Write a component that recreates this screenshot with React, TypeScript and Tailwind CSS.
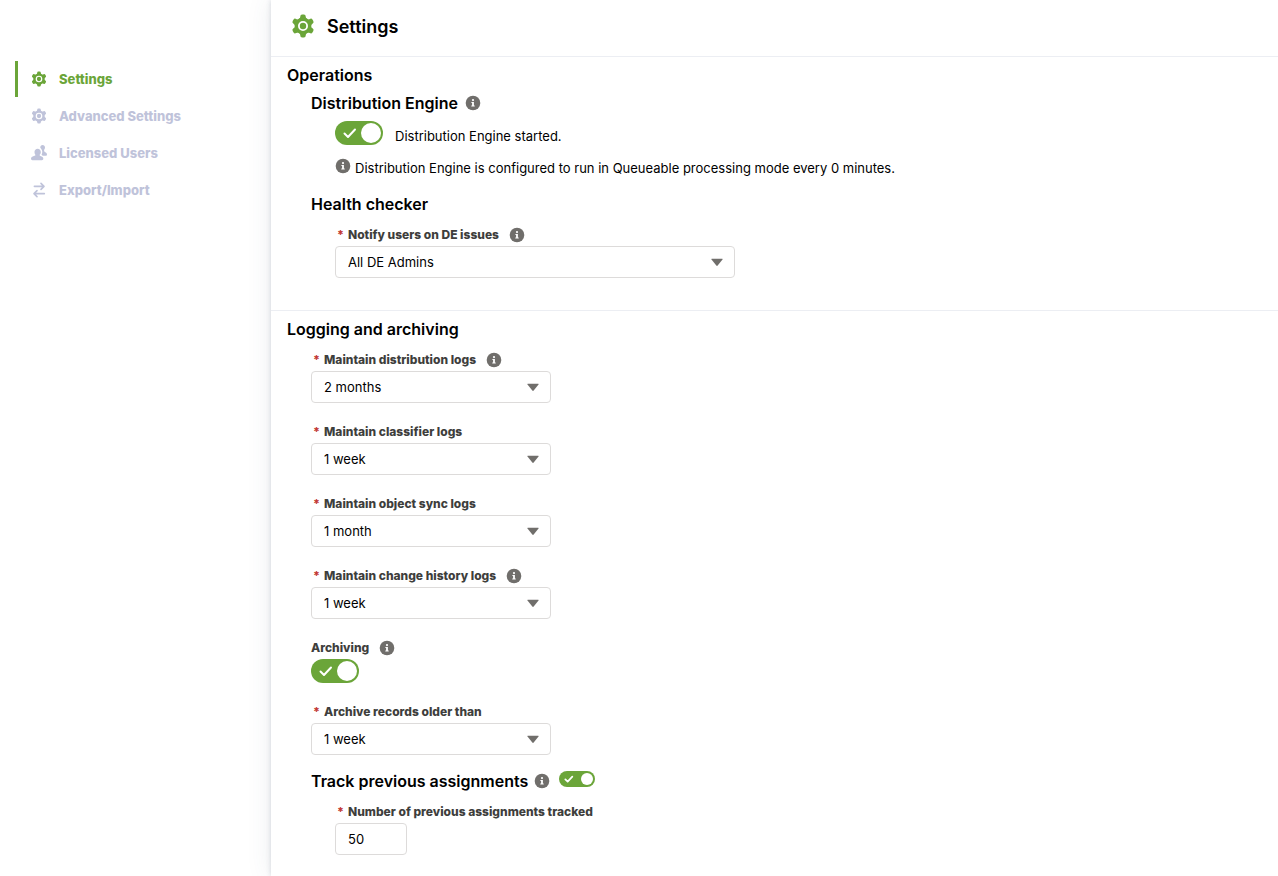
import { useId } from "react";
import type { ReactNode } from "react";
import clsx from "clsx";

const GearIcon = ({ className }: { className?: string }) => (
  <svg viewBox="0 0 24 24" className={className} fill="currentColor" aria-hidden="true">
    <path
      fillRule="evenodd"
      d="M12 3.6a8.4 8.4 0 1 0 0 16.8a8.4 8.4 0 1 0 0-16.8zM12 7a5 5 0 1 1 0 10a5 5 0 1 1 0-10z"
    />
    <circle cx="12" cy="12" r="3.2" />
    {[0, 60, 120, 180, 240, 300].map((deg) => (
      <path
        key={deg}
        transform={`rotate(${deg} 12 12)`}
        d="M7.8 5.6Q9.3 4.4 9.3 2.600Q9.3 .6 11.100 .6H12.900Q14.700 .6 14.700 2.600Q14.700 4.400 16.200 5.600L12 5.200z"
      />
    ))}
  </svg>
);

const UsersIcon = ({ className }: { className?: string }) => (
  <svg viewBox="0 0 24 24" className={className} fill="currentColor" aria-hidden="true">
    <path d="M10 5.500c2.800 0 4.700 2.100 4.700 4.900 0 1.900-.8 3.300-1.700 4.300-.3.900.1 1.500 1.100 1.900 2.700 1 4.400 1.900 4.400 4.200 0 1.400-.9 2.200-2.200 2.200H2.200C.9 23 0 22.200 0 20.800c0-2.300 1.700-3.200 4.400-4.200 1.700-.6 2.300-1 2.300-1.700-.9-1-1.500-2.500-1.500-4.500 0-2.800 2-4.900 4.800-4.900z" />
    <path d="M17.300 0c2.200 0 3.700 1.700 3.700 3.900 0 1.500-.5 2.600-1.300 3.400-.3.900 0 2.400 1.100 3.200 2.100.9 3.200 1.800 3.200 3.700 0 1.300-.8 1.800-1.800 1.800h-4.700c-.8-.8-1.300-1-1.700-1.300 1.600-3 1.700-6.500-.6-9.200-.8-.9-1.300-1.300-1.300-1.900C14 1.500 15.300 0 17.300 0z" />
  </svg>
);

const SwapIcon = ({ className }: { className?: string }) => (
  <svg
    viewBox="0 0 24 24"
    className={className}
    fill="none"
    stroke="currentColor"
    strokeWidth="2.4"
    strokeLinecap="round"
    strokeLinejoin="round"
    aria-hidden="true"
  >
    <path d="M5 6.500h14M15 2l4.500 4.500L15 11M20 17.500H5M9 13l-4.500 4.500L9 22" />
  </svg>
);

const InfoIcon = () => (
  <svg viewBox="0 0 16 16" className="size-4 shrink-0" aria-hidden="true">
    <circle cx="8" cy="8" r="7.300" fill="#706e6b" />
    <circle cx="8" cy="5.100" r="1.100" fill="#fff" />
    <path d="M6.400 7h2.500v3.400h.8v1.100H6.300v-1.100h.8V8h-.7z" fill="#fff" />
  </svg>
);

const InfoButton = ({ label }: { label: string }) => (
  <button type="button" aria-label={label} className="shrink-0">
    <InfoIcon />
  </button>
);

const Toggle = ({ id, label, small }: { id: string; label?: string; small?: boolean }) => (
  <span className={clsx("relative block shrink-0", small ? "h-4 w-9" : "h-6 w-12")}>
    <input
      id={id}
      type="checkbox"
      defaultChecked
      aria-label={label}
      className="peer block size-full cursor-pointer appearance-none rounded-full bg-gray-400 checked:bg-[#6ba539]"
    />
    <svg
      viewBox="0 0 14 12"
      className={clsx(
        "pointer-events-none absolute hidden peer-checked:block",
        small ? "left-1 top-1 h-2 w-3" : "left-2 top-1.5 h-3 w-3.5"
      )}
      fill="none"
      stroke="#fff"
      strokeWidth={small ? 2.6 : 2}
      strokeLinecap="round"
      strokeLinejoin="round"
      aria-hidden="true"
    >
      <path d="M1.500 6.500L5 10L12 2.500" />
    </svg>
    <span
      className={clsx(
        "pointer-events-none absolute left-0.5 top-0.5 rounded-full bg-white",
        small ? "size-3 peer-checked:left-[22px]" : "size-5 peer-checked:left-[26px]"
      )}
    />
  </span>
);

type FieldLabelProps = { htmlFor: string; children: ReactNode; required?: boolean; info?: boolean };

const FieldLabel = ({ htmlFor, children, required = true, info }: FieldLabelProps) => (
  <div className="flex h-6 items-center gap-2.5 pt-0.5">
    <label htmlFor={htmlFor} className="flex text-xs font-extrabold text-[#3e3e3c]">
      {required && <span className="w-[13px] pl-0.5 text-[#c23934]">*</span>}
      {children}
    </label>
    {info && <InfoButton label="Help" />}
  </div>
);

type SelectFieldProps = { label: string; options: string[]; info?: boolean; wide?: boolean };

const SelectField = ({ label, options, info, wide }: SelectFieldProps) => {
  const id = useId();
  return (
    <div className={wide ? "max-w-[400px]" : "max-w-60"}>
      <FieldLabel htmlFor={id} info={info}>
        {label}
      </FieldLabel>
      <div className="grid items-center">
        <select
          id={id}
          className="col-start-1 row-start-1 h-8 w-full appearance-none rounded border border-[#dddbda] bg-white px-3 pt-0.5 text-[13px] text-black"
        >
          {options.map((option) => (
            <option key={option}>{option}</option>
          ))}
        </select>
        <svg
          viewBox="0 0 12 8"
          className="pointer-events-none col-start-1 row-start-1 mr-3 h-2 w-3 justify-self-end"
          fill="#706e6b"
          aria-hidden="true"
        >
          <path d="M.8 .8h10.400q.8 0 .3 .7L6.700 7.500q-.7.800-1.400 0L.5 1.500Q0 .8.800 .8z" />
        </svg>
      </div>
    </div>
  );
};

const navItems = [
  { label: "Settings", icon: GearIcon, active: true },
  { label: "Advanced Settings", icon: GearIcon },
  { label: "Licensed Users", icon: UsersIcon },
  { label: "Export/Import", icon: SwapIcon },
];

const SideBar = () => (
  <nav className="flex w-[271px] shrink-0 flex-col gap-px pl-[15px] pt-[61px]">
    {navItems.map(({ label, icon: Icon, active }) => (
      <a
        key={label}
        href="#"
        className={clsx(
          "flex h-9 items-center gap-3 border-l-[3px] pl-[13px] text-[13px] font-extrabold",
          active ? "border-[#6ba539] text-[#6ba539]" : "border-transparent text-[#bfc3da]"
        )}
      >
        <Icon className="size-4" />
        <span className="pt-0.5">{label}</span>
      </a>
    ))}
  </nav>
);

const App = () => (
  <div className="flex min-h-screen bg-white font-[Inter,sans-serif] text-[13px] text-black">
    <SideBar />
    <main className="min-w-0 flex-1 bg-white shadow-[0_0_24px_rgba(60,80,110,0.1),0_0_5px_rgba(60,70,100,0.2)]">
      <header className="flex h-[57px] items-center gap-3 border-b border-[#eceef3] pb-1 pl-5">
        <GearIcon className="size-6 text-[#6ba539]" />
        <h1 className="pt-0.5 text-lg font-semibold">Settings</h1>
      </header>

      <section className="border-b border-[#eceef3] pb-8 pl-4 pt-1">
        <h2 className="text-base font-semibold leading-7">Operations</h2>
        <div className="pl-6">
          <div className="flex h-7 items-center gap-[7px]">
            <h3 className="text-base font-semibold">Distribution Engine</h3>
            <InfoButton label="About the distribution engine" />
          </div>
          <div className="pl-6">
            <div className="flex items-start gap-3 pt-1">
              <Toggle id="engine" />
              <label htmlFor="engine" className="pt-[5px] leading-5">
                Distribution Engine started.
              </label>
            </div>
            <p className="flex gap-1 pt-3 leading-5">
              <InfoIcon />
              Distribution Engine is configured to run in Queueable processing mode every 0 minutes.
            </p>
          </div>
          <h3 className="pt-3 text-base font-semibold leading-7">Health checker</h3>
          <div className="pl-6 pt-1">
            <SelectField
              wide
              info
              label="Notify users on DE issues"
              options={["All DE Admins", "Specific users", "Nobody"]}
            />
          </div>
        </div>
      </section>

      <section className="pb-5 pl-4 pt-1">
        <h2 className="text-base font-semibold leading-7">Logging and archiving</h2>
        <div className="flex flex-col gap-4 pl-6 pt-1">
          <SelectField info label="Maintain distribution logs" options={["2 months", "1 month", "1 week"]} />
          <SelectField label="Maintain classifier logs" options={["1 week", "1 month", "2 months"]} />
          <SelectField label="Maintain object sync logs" options={["1 month", "1 week", "2 months"]} />
          <SelectField info label="Maintain change history logs" options={["1 week", "1 month", "2 months"]} />
          <div>
            <FieldLabel htmlFor="archiving" required={false} info>
              Archiving
            </FieldLabel>
            <Toggle id="archiving" />
          </div>
          <SelectField label="Archive records older than" options={["1 week", "1 month", "2 months"]} />
        </div>

        <div className="pl-6 pt-3">
          <div className="flex h-7 items-center gap-1.5">
            <h3 className="text-base font-semibold">Track previous assignments</h3>
            <InfoButton label="About tracking previous assignments" />
            <div className="pb-1 pl-[3px]">
              <Toggle small id="track" label="Track previous assignments" />
            </div>
          </div>
          <div className="pl-6 pt-1">
            <FieldLabel htmlFor="tracked">Number of previous assignments tracked</FieldLabel>
            <input
              id="tracked"
              type="text"
              inputMode="numeric"
              defaultValue="50"
              className="block h-8 w-[72px] rounded border border-[#dddbda] bg-white px-3 text-[13px]"
            />
          </div>
        </div>
      </section>
    </main>
  </div>
);

export default App;
